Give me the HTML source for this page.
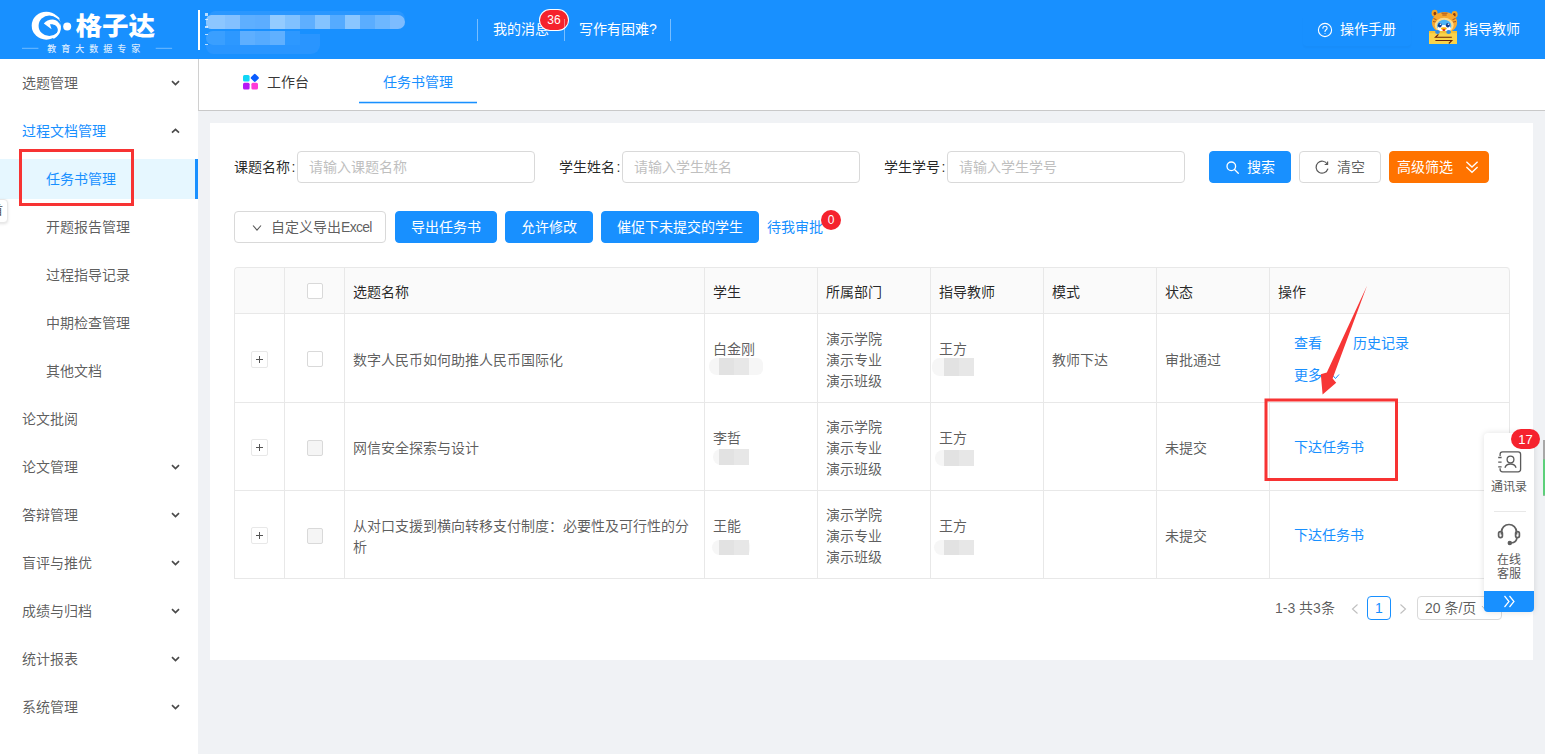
<!DOCTYPE html>
<html lang="zh-CN">
<head>
<meta charset="utf-8">
<title>任务书管理</title>
<style>
*{box-sizing:border-box;margin:0;padding:0}
html,body{width:1545px;height:754px;overflow:hidden}
body{position:relative;background:#f0f2f5;font-family:"Liberation Sans","Noto Sans CJK SC",sans-serif;font-size:14px;color:rgba(0,0,0,.65);line-height:21px}
.abs{position:absolute}
/* header */
#hdr{position:absolute;left:0;top:0;width:1545px;height:59px;background:#1890ff;color:#fff}
#hdr .sep{position:absolute;top:19px;width:1px;height:22px;background:rgba(255,255,255,.42)}
#hdr .t{position:absolute;top:19px;line-height:21px;font-size:14px;white-space:nowrap}
.badge{position:absolute;background:#f5222d;color:#fff;border-radius:10px;font-size:12px;line-height:20px;height:20px;text-align:center;box-shadow:0 0 0 1px #fff}
/* sidebar */
#side{position:absolute;left:0;top:59px;width:198px;height:695px;background:#fff}
#side .mi{position:absolute;left:0;width:198px;height:40px;line-height:40px;padding-left:22px;font-size:14px;color:rgba(0,0,0,.65);white-space:nowrap}
#side .mi.sub{padding-left:46px}
#side .mi.act{color:#1890ff}
#side .mi.sel{background:#e6f7ff;color:#1890ff;border-right:3px solid #1890ff}
#side .mi svg{position:absolute;left:170.500px;top:16px}
/* tabs */
#tabs{position:absolute;left:198px;top:59px;width:1347px;height:52px;background:#fff;border-left:1px solid #d0d0d0;border-bottom:1px solid #c9c9c9}
#tabs .tab{position:absolute;top:13px;line-height:21px;font-size:14px;white-space:nowrap}
/* card */
#card{position:absolute;left:210px;top:123px;width:1323px;height:537px;background:#fff}
.lbl{position:absolute;top:157px;line-height:21px;color:rgba(0,0,0,.85);white-space:nowrap}
.inp{position:absolute;top:151px;height:32px;width:238px;border:1px solid #d9d9d9;border-radius:4px;background:#fff;padding:0 11px;line-height:30px;color:#bfbfbf;white-space:nowrap}
.btn{position:absolute;height:32px;border-radius:4px;line-height:30px;text-align:center;white-space:nowrap;font-size:14px;border:1px solid #1890ff;background:#1890ff;color:#fff}
.btn.df{background:#fff;border-color:#d9d9d9;color:rgba(0,0,0,.65)}
.btn.or{background:#ff7300;border-color:#ff7300}
/* table */
#tbl{position:absolute;left:234px;top:267px;width:1276px;border-collapse:separate;border-spacing:0;border:1px solid #e8e8e8;border-right:0;border-bottom:0;border-radius:4px 4px 0 0;table-layout:fixed}
#tbl th,#tbl td{border-right:1px solid #e8e8e8;border-bottom:1px solid #e8e8e8;padding:14px 8px 10px;text-align:left;font-weight:normal;line-height:21px;vertical-align:middle;font-size:14px}
#tbl th{background:#fafafa;color:rgba(0,0,0,.85);font-weight:400}
#tbl td{color:rgba(0,0,0,.65);height:88px}
#tbl tr.r1 td{height:89px}
.cb{display:block;width:16px;height:16px;border:1px solid #d9d9d9;border-radius:2px;background:#fff;margin:0 auto}
.cb.dis{background:#f5f5f5}
.exp{display:block;width:17px;height:17px;border:1px solid #e8e8e8;border-radius:2px;background:#fff;margin:0 auto;position:relative}
.exp:before{content:"";position:absolute;left:4px;top:7px;width:7px;height:1px;background:#555}
.exp:after{content:"";position:absolute;left:7px;top:4px;width:1px;height:7px;background:#555}
.blur{display:block;height:21px;position:relative}
.blur:before{content:"";position:absolute;left:var(--hx,-2px);top:var(--t,0px);width:var(--hw,40px);height:var(--h,16px);border-radius:8px 6px 6px 8px;background:#f6f6f6}
.blur:after{content:"";position:absolute;left:var(--x,6px);top:var(--t,0px);width:30px;height:var(--h,16px);background:linear-gradient(90deg,#e2e2e2 0 50%,#e7e7e7 50%)}
#tbl th:nth-child(-n+2){padding:12px 8px}
#tbl td:nth-child(-n+2){padding:13px 8px 11px}
#tbl td.op{padding:13px 8px 11px;line-height:32px}
#tbl td.op1{padding:13px 8px 11px}
a.lk{color:#1890ff;text-decoration:none;white-space:nowrap}
</style>
</head>
<body>

<!-- ============ HEADER ============ -->
<div id="hdr">
  <svg id="logo" class="abs" style="left:0;top:0" width="198" height="59" viewBox="0 0 198 59">
    <g>
      <ellipse cx="46.3" cy="25.7" rx="14.6" ry="14" fill="#fff"/>
      <ellipse cx="49.3" cy="25.7" rx="10.7" ry="10.3" fill="#1890ff"/>
      <path d="M43.8 23.6C46 21 49 19.5 52.5 19.5c4.600 0 8.200 4 8.200 9 0 4-2.600 8-6.800 10.200L51.500 37.200c3.900-1.400 6.500-4.500 6.300-7.700-.2-3.500-3.300-5.700-7.800-5.300l1.600 5.100z" fill="#fff"/>
      <path d="M51.500 18.100c5.200-.300 9.600 3.200 10.600 9.400" fill="none" stroke="#1890ff" stroke-width="1.500"/>
      <path d="M56.200 15.600c1.400.9 2.700 1.900 3.700 2.900l-1.500.5z" fill="#fff"/>
      <circle cx="67.2" cy="26.5" r="4" fill="#fff"/>
    </g>
    <text x="75.4" y="34.7" font-family="'Liberation Sans','Noto Sans CJK SC',sans-serif" font-weight="900" font-size="24.5" fill="#fff" textLength="79.6" lengthAdjust="spacingAndGlyphs">格子达</text>
    <rect x="22" y="47.8" width="16.4" height="1" fill="#fff" opacity=".38"/>
    <rect x="155.7" y="47.8" width="16.4" height="1" fill="#fff" opacity=".38"/>
    <text x="47.2" y="51.5" font-family="'Liberation Sans','Noto Sans CJK SC',sans-serif" font-size="9" fill="#fff" opacity=".82" letter-spacing="5" font-weight="500">教育大数据专家</text>
  </svg>
  <div class="abs" style="left:198px;top:10px;width:2px;height:40px;background:#fff"></div>
  <div id="schoolblur" class="abs" style="left:206px;top:10px;width:202px;height:46px">
    <div class="abs" style="left:3px;top:1px;width:196px;height:8px;border-radius:8px 10px 0 0;background:#2a97ff"></div>
    <div class="abs" style="left:0;top:5px;width:199px;height:14px;border-radius:6px 8px 8px 6px;background:linear-gradient(90deg,#8cc6ff 0px 19px,#83c0ff 19px 34px,#5eafff 34px 49px,#5cadff 49px 64px,#93cbff 64px 79px,#80c1ff 79px 94px,#5eafff 94px 109px,#84c3ff 109px 124px,#55abff 124px 139px,#8ac6ff 139px 154px,#5aadff 154px 169px,#6db7ff 169px 184px,#7dbcff 184px 199px)"></div>
    <div class="abs" style="left:0;top:21px;width:94px;height:14px;border-radius:8px 0 0 8px;background:linear-gradient(90deg,#3a9fff 0px 19px,#2d98ff 19px 34px,#5eafff 34px 49px,#56abff 49px 64px,#60b0ff 64px 79px,#2d98ff 79px 94px)"></div>
    <div class="abs" style="left:0;top:35px;width:114px;height:9px;border-radius:0 0 12px 10px;background:#2995ff"></div>
    <div class="abs" style="left:94px;top:24px;width:20px;height:12px;background:#2995ff"></div>
    <div class="abs" style="left:-1px;top:3px;width:3px;height:36px;background:linear-gradient(180deg,#fff 0 3px,transparent 3px 6px,#fff 6px 7px,transparent 7px 13px,#fff 13px 15px,transparent 15px 21px,#fff 21px 22px,transparent 22px 31px,#fff 31px 32px,transparent 32px);opacity:.7"></div>
  </div>
  <div class="sep" style="left:477px"></div>
  <div class="t" style="left:493px">我的消息</div>
  <div class="badge" style="left:540px;top:10px;width:28px">36</div>
  <div class="sep" style="left:564px"></div>
  <div class="t" style="left:579px">写作有困难?</div>
  <div class="sep" style="left:670px"></div>
  <div id="hright">
    <div class="abs" style="left:1303px;top:14px;width:108px;height:32px;border-radius:4px;box-shadow:0 2px 2px rgba(0,0,0,.025)"></div>
    <svg class="abs" style="left:1317px;top:22px" width="16" height="16" viewBox="0 0 16 16" fill="none" stroke="#fff" stroke-width="1.1"><circle cx="8" cy="8" r="6.6"/><path d="M5.9 6.3c0-1.2.9-2 2.1-2s2.1.8 2.1 1.9c0 1.5-2.1 1.6-2.1 3.3" stroke-linecap="round"/><circle cx="8" cy="11.4" r=".5" fill="#fff" stroke="none"/></svg>
    <div class="t" style="left:1340px">操作手册</div>
    <svg class="abs" style="left:1426px;top:8px" width="34" height="38" viewBox="0 0 34 38">
      <ellipse cx="8.6" cy="5.2" rx="3" ry="3.4" fill="#f5a623"/><ellipse cx="8.9" cy="5.6" rx="1.4" ry="1.8" fill="#8a3b12"/>
      <ellipse cx="28.6" cy="6.4" rx="3" ry="3.4" fill="#f5a623"/><ellipse cx="28.3" cy="6.9" rx="1.4" ry="1.8" fill="#8a3b12"/>
      <ellipse cx="18.5" cy="14.6" rx="12.6" ry="10.6" fill="#f7a830"/>
      <path d="M15.5 5.2h6M16.3 7h4.4M7.5 10.5l3 1.2M7 13.5l3 .6M29.5 10.5l-3 1.2M30 13.5l-3 .6" stroke="#a8521a" stroke-width="1" fill="none"/>
      <ellipse cx="18.2" cy="17.6" rx="9.4" ry="7.8" fill="#fbdc8e"/>
      <ellipse cx="18.2" cy="17.8" rx="7.2" ry="6" fill="#4db4f5"/>
      <ellipse cx="18.2" cy="20.4" rx="6.6" ry="3.4" fill="#fff"/>
      <ellipse cx="13.8" cy="17.2" rx="1.9" ry="2.3" fill="#123a8c"/><ellipse cx="21.8" cy="17.2" rx="1.9" ry="2.3" fill="#123a8c"/>
      <circle cx="14.4" cy="16.3" r=".7" fill="#fff"/><circle cx="22.4" cy="16.3" r=".7" fill="#fff"/>
      <ellipse cx="17.8" cy="20.6" rx="3" ry="1.3" fill="#ffb400"/><ellipse cx="17.9" cy="21.9" rx="1.5" ry="1" fill="#e02020"/>
      <rect x="3" y="23" width="28" height="13" fill="#fbd34a"/>
      <rect x="3" y="23" width="28" height="2.2" fill="#f4c136"/>
      <ellipse cx="11.5" cy="24" rx="2.4" ry="1.9" fill="#2f8fe8"/><ellipse cx="22.6" cy="24" rx="2.4" ry="1.9" fill="#2f8fe8"/>
      <path d="M25.8 29.3H9.4l3-2.9M9.4 32.5h16.4l-3 3" stroke="#6b2408" stroke-width="1.1" fill="none"/>
    </svg>
    <div class="t" style="left:1464px">指导教师</div>
  </div>
</div>

<!-- ============ SIDEBAR ============ -->
<div id="side">
  <div class="mi " style="top:4px">选题管理<svg width="9" height="8" viewBox="0 0 9 8"><path d="M1 2.200l3.500 3.300 3.500-3.300" fill="none" stroke="#4a4a4a" stroke-width="1.700"/></svg></div>
  <div class="mi act" style="top:52px">过程文档管理<svg width="9" height="8" viewBox="0 0 9 8"><path d="M1 5.600l3.500-3.300 3.500 3.300" fill="none" stroke="#4a4a4a" stroke-width="1.700"/></svg></div>
  <div class="mi sub sel" style="top:100px">任务书管理</div>
  <div class="mi sub" style="top:148px">开题报告管理</div>
  <div class="mi sub" style="top:196px">过程指导记录</div>
  <div class="mi sub" style="top:244px">中期检查管理</div>
  <div class="mi sub" style="top:292px">其他文档</div>
  <div class="mi " style="top:340px">论文批阅</div>
  <div class="mi " style="top:388px">论文管理<svg width="9" height="8" viewBox="0 0 9 8"><path d="M1 2.200l3.500 3.300 3.500-3.300" fill="none" stroke="#4a4a4a" stroke-width="1.700"/></svg></div>
  <div class="mi " style="top:436px">答辩管理<svg width="9" height="8" viewBox="0 0 9 8"><path d="M1 2.200l3.500 3.300 3.500-3.300" fill="none" stroke="#4a4a4a" stroke-width="1.700"/></svg></div>
  <div class="mi " style="top:484px">盲评与推优<svg width="9" height="8" viewBox="0 0 9 8"><path d="M1 2.200l3.500 3.300 3.500-3.300" fill="none" stroke="#4a4a4a" stroke-width="1.700"/></svg></div>
  <div class="mi " style="top:532px">成绩与归档<svg width="9" height="8" viewBox="0 0 9 8"><path d="M1 2.200l3.500 3.300 3.500-3.300" fill="none" stroke="#4a4a4a" stroke-width="1.700"/></svg></div>
  <div class="mi " style="top:580px">统计报表<svg width="9" height="8" viewBox="0 0 9 8"><path d="M1 2.200l3.500 3.300 3.500-3.300" fill="none" stroke="#4a4a4a" stroke-width="1.700"/></svg></div>
  <div class="mi " style="top:628px">系统管理<svg width="9" height="8" viewBox="0 0 9 8"><path d="M1 2.200l3.500 3.300 3.500-3.300" fill="none" stroke="#4a4a4a" stroke-width="1.700"/></svg></div>
  <div class="abs" style="left:-4px;top:140px;width:12px;height:24px;border:1px solid #e8e8e8;border-radius:4px;background:#fff;box-shadow:0 1px 3px rgba(0,0,0,.12);overflow:hidden;font-size:12px;line-height:22px;color:#555;text-indent:-6px">首</div>
</div>

<!-- ============ TABS ============ -->
<div id="tabs">
  <svg class="abs" style="left:43px;top:13.5px" width="18" height="18" viewBox="0 0 18 18">
    <rect x="1" y="2" width="6.600" height="6.600" rx="1.500" fill="#10d6f5"/>
    <rect x="9.600" y="1.700" width="6.400" height="6.400" rx="1.200" fill="#0a5cff" transform="rotate(45 12.800 4.900)"/>
    <rect x="1" y="9.800" width="6.600" height="6.600" rx="1.500" fill="#b619f5"/>
    <rect x="9.400" y="9.800" width="6.600" height="6.600" rx="1.500" fill="#ff3ad8"/>
  </svg>
  <div class="tab" style="left:68px;color:rgba(0,0,0,.8)">工作台</div>
  <div class="tab" style="left:184px;color:#1890ff">任务书管理</div>
  <div class="abs" style="left:160px;top:42px;width:118px;height:3px;background:linear-gradient(180deg,rgba(24,144,255,.25) 0 1px,#1890ff 1px 2px,rgba(24,144,255,.3) 2px)"></div>
</div>

<!-- ============ CARD ============ -->
<div id="card"></div>

<div id="content">
  <!-- search row -->
  <div class="lbl" style="left:234px">课题名称<span style="margin-left:1.500px">:</span></div>
  <div class="inp" style="left:297px">请输入课题名称</div>
  <div class="lbl" style="left:559px">学生姓名<span style="margin-left:1.500px">:</span></div>
  <div class="inp" style="left:622px">请输入学生姓名</div>
  <div class="lbl" style="left:884px">学生学号<span style="margin-left:1.500px">:</span></div>
  <div class="inp" style="left:947px">请输入学生学号</div>
  <div class="btn" style="left:1209px;top:151px;width:82px;padding-left:22px">搜索
    <svg class="abs" style="left:15px;top:8px" width="15" height="15" viewBox="0 0 15 15" fill="none" stroke="#fff" stroke-width="1.300"><circle cx="6.300" cy="6.300" r="4.300"/><path d="M9.500 9.500l3.800 3.800" stroke-linecap="round"/></svg>
  </div>
  <div class="btn df" style="left:1299px;top:151px;width:82px;padding-left:22px">清空
    <svg class="abs" style="left:14px;top:7px" width="16" height="16" viewBox="0 0 16 16" fill="none" stroke="#595959" stroke-width="1.200"><path d="M13.300 5.200A6 6 0 1 0 13.800 10" stroke-linecap="round"/><path d="M13.600 2.600v2.900h-2.900" stroke-linejoin="round"/></svg>
  </div>
  <div class="btn or" style="left:1389px;top:151px;width:100px;text-align:left;padding-left:7px">高级筛选
    <svg class="abs" style="left:75px;top:8px" width="14" height="14" viewBox="0 0 12 12" fill="none" stroke="#fff" stroke-width="1.100"><path d="M1.200 1.500L6 6l4.800-4.500M1.200 6L6 10.500 10.800 6"/></svg>
  </div>
  <!-- action row -->
  <div class="btn df" style="left:234px;top:211px;width:152px;text-align:left;padding-left:36px">自定义导出<span style="letter-spacing:-.7px">Excel</span>
    <svg class="abs" style="left:17px;top:11px" width="10" height="10" viewBox="0 0 10 10" fill="none" stroke="#595959" stroke-width="1.100"><path d="M1 2.500l4 4.600 4-4.600"/></svg>
  </div>
  <div class="btn" style="left:395px;top:211px;width:102px">导出任务书</div>
  <div class="btn" style="left:505px;top:211px;width:88px">允许修改</div>
  <div class="btn" style="left:601px;top:211px;width:158px">催促下未提交的学生</div>
  <a class="lk abs" style="left:767px;top:217px;line-height:21px">待我审批</a>
  <div class="badge" style="left:821px;top:210px;width:20px;height:20px;line-height:20px;border-radius:10px;box-shadow:none">0</div>

  <!-- table -->
  <table id="tbl">
    <colgroup><col style="width:50px"><col style="width:60px"><col style="width:360px"><col style="width:113px"><col style="width:113px"><col style="width:113px"><col style="width:113px"><col style="width:113px"><col style="width:240px"></colgroup>
    <thead><tr>
      <th style="border-top-left-radius:4px"></th><th><span class="cb"></span></th><th>选题名称</th><th>学生</th><th>所属部门</th><th>指导教师</th><th>模式</th><th>状态</th><th style="border-top-right-radius:4px">操作</th>
    </tr></thead>
    <tbody>
    <tr class="r1">
      <td><span class="exp"></span></td><td><span class="cb"></span></td>
      <td>数字人民币如何助推人民币国际化</td>
      <td>白金刚<span class="blur" style="--t:-2px;--h:17px;--hx:-4px;--hw:54px;--x:6px"></span></td>
      <td>演示学院<br>演示专业<br>演示班级</td>
      <td>王方<span class="blur" style="--t:-2px;--h:18px;--hx:-7px;--hw:42px;--x:5px"></span></td>
      <td>教师下达</td><td>审批通过</td>
      <td class="op"><a class="lk" style="margin-left:16px">查看</a><a class="lk" style="margin-left:31px">历史记录</a><br><a class="lk" style="margin-left:16px">更多</a><svg style="margin-left:9px;vertical-align:-1px" width="9" height="9" viewBox="0 0 9 9" fill="none" stroke="#1890ff" stroke-width="1"><path d="M1 2.500l3.500 4 3.500-4"/></svg></td>
    </tr>
    <tr>
      <td><span class="exp"></span></td><td><span class="cb dis"></span></td>
      <td>网信安全探索与设计</td>
      <td>李哲<span class="blur" style="--t:.5px;--h:16px;--hx:0px;--hw:36px;--x:6px"></span></td>
      <td>演示学院<br>演示专业<br>演示班级</td>
      <td>王方<span class="blur" style="--t:1px;--h:16px;--hx:-4px;--hw:39px;--x:5px"></span></td>
      <td></td><td>未提交</td>
      <td class="op1"><a class="lk" style="margin-left:16px">下达任务书</a></td>
    </tr>
    <tr>
      <td><span class="exp"></span></td><td><span class="cb dis"></span></td>
      <td>从对口支援到横向转移支付制度：必要性及可行性的分析</td>
      <td>王能<span class="blur" style="--t:3.5px;--h:15px;--hx:-1px;--hw:38px;--x:6px"></span></td>
      <td>演示学院<br>演示专业<br>演示班级</td>
      <td>王方<span class="blur" style="--t:3px;--h:15.500px;--hx:-5px;--hw:40px;--x:5px"></span></td>
      <td></td><td>未提交</td>
      <td class="op1"><a class="lk" style="margin-left:16px">下达任务书</a></td>
    </tr>
    </tbody>
  </table>

  <!-- pagination -->
  <div class="abs" style="left:1275px;top:598px;line-height:21px;white-space:nowrap">1-3 共3条</div>
  <svg class="abs" style="left:1350px;top:603px" width="10" height="12" viewBox="0 0 10 12" fill="none" stroke="#bfbfbf" stroke-width="1.100"><path d="M7.500 1.500L2.500 6l5 4.500"/></svg>
  <div class="abs" style="left:1367px;top:596px;width:24px;height:24px;border:1px solid #1890ff;border-radius:4px;text-align:center;line-height:22px;color:#1890ff;background:#fff">1</div>
  <svg class="abs" style="left:1398px;top:603px" width="10" height="12" viewBox="0 0 10 12" fill="none" stroke="#bfbfbf" stroke-width="1.100"><path d="M2.500 1.500L7.500 6l-5 4.500"/></svg>
  <div class="abs" style="left:1417px;top:596px;width:85px;height:24px;border:1px solid #d9d9d9;border-radius:4px;line-height:22px;padding-left:7px;background:#fff;white-space:nowrap">20 条/页<svg class="abs" style="left:63px;top:7px" width="8" height="8" viewBox="0 0 8 8" fill="none" stroke="#bfbfbf" stroke-width="1"><path d="M1 2l3 3.500 3-3.500"/></svg></div>
</div>

<div id="float" class="abs" style="left:1484px;top:433px;width:50px;height:179px;background:#fff;border-radius:4px;box-shadow:0 0 6px rgba(0,0,0,.12);font-size:12px;line-height:15px;color:#595959;text-align:center">
  <svg class="abs" style="left:12px;top:15px" width="28" height="28" viewBox="0 0 28 28" fill="none" stroke="#5a5a5a" stroke-width="1.300"><path d="M4.100 8V6.300a2.500 2.500 0 0 1 2.500-2.500h15.500a2.500 2.500 0 0 1 2.500 2.500v15a2.500 2.500 0 0 1-2.500 2.500H6.600a2.500 2.500 0 0 1-2.500-2.500V20.300"/><path d="M2.200 9.500h3.400M2.200 14.200h3.400M2.200 18.800h3.400"/><circle cx="14.500" cy="11.500" r="3.400"/><path d="M8.900 19.700c1-2.600 3-3.700 5.600-3.700s4.600 1.100 5.600 3.700"/></svg>
  <div class="abs" style="left:0;top:46.500px;width:50px">通讯录</div>
  <div class="abs" style="left:10px;top:78px;width:32px;height:1px;background:#e8e8e8"></div>
  <svg class="abs" style="left:12px;top:88px" width="26" height="26" viewBox="0 0 26 26" fill="none" stroke="#606060" stroke-width="1.700"><path d="M5.500 13.500v-2.500a7.500 7.500 0 0 1 15 0v2.500"/><rect x="2.600" y="10.600" width="3.800" height="6" rx="1.800"/><rect x="19.600" y="10.600" width="3.800" height="6" rx="1.800"/><path d="M20.800 16.800c0 3.200-2.500 5-5.800 5.200"/><circle cx="13.800" cy="22" r="1.400" fill="#555"/></svg>
  <div class="abs" style="left:0;top:119.500px;width:50px;line-height:14.300px">在线<br>客服</div>
  <div class="abs" style="left:0;top:158px;width:50px;height:21px;background:#1890ff;border-radius:0 0 4px 4px">
    <svg class="abs" style="left:19px;top:4px" width="13" height="13" viewBox="0 0 13 13" fill="none" stroke="#fff" stroke-width="1.200"><path d="M1.500 1l4.500 5.500-4.500 5.500M6.500 1L11 6.500 6.500 12"/></svg>
  </div>
  <div class="badge" style="left:27px;top:-4px;width:29px;height:20px;box-shadow:none;font-size:13px;line-height:21px;font-weight:500">17</div>
</div>
<div class="abs" style="left:1543px;top:440px;width:2px;height:56px;background:linear-gradient(180deg,#a8a8a8 0 33%,#5cd07a 36% 97%,#b5b5b5)"></div>

<svg id="annot" class="abs" style="left:0;top:0;pointer-events:none" width="1545" height="754" viewBox="0 0 1545 754">
  <rect x="20.500" y="150.500" width="112" height="54" fill="none" stroke="#f73333" stroke-width="3"/>
  <rect x="1266" y="400" width="130.500" height="79.500" fill="none" stroke="#f73333" stroke-width="3"/>
  <path d="M1367 285.800L1326.800 372.600 1320.800 374.300 1322.600 394.600 1336.200 382.800 1332.600 378.600z" fill="#f73636"/>
</svg>

</body>
</html>
